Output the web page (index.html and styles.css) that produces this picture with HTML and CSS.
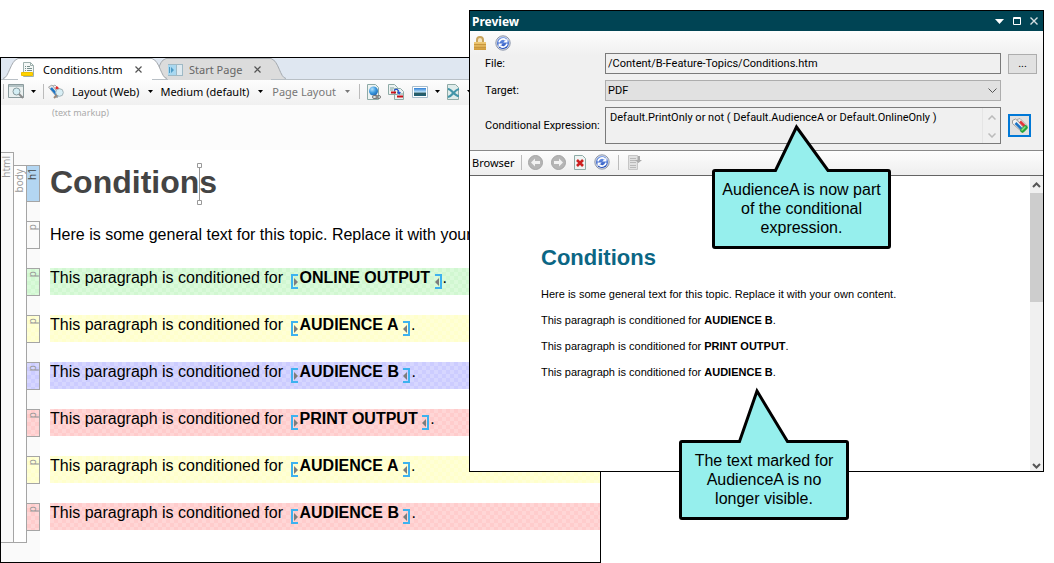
FILE: index.html
```html
<!DOCTYPE html>
<html lang="en">
<head>
<meta charset="utf-8">
<title>Conditions.htm</title>
<link rel="stylesheet" href="styles.css">
</head>
<body>
<svg class="defs" width="0" height="0" aria-hidden="true">
  <defs>
    <linearGradient id="ball" x1="0" y1="0" x2="0" y2="1"><stop offset="0" stop-color="#7fa4ee"/><stop offset="1" stop-color="#1d49b8"/></linearGradient>
    <linearGradient id="gold" x1="0" y1="0" x2="0" y2="1"><stop offset="0" stop-color="#f0cb78"/><stop offset="1" stop-color="#cf9a3a"/></linearGradient>
    <linearGradient id="photo" x1="0" y1="0" x2="0" y2="1"><stop offset="0" stop-color="#2f7fd6"/><stop offset=".5" stop-color="#b9e0f7"/><stop offset=".65" stop-color="#2d5b62"/><stop offset="1" stop-color="#1d6078"/></linearGradient>
    <radialGradient id="globe" cx=".35" cy=".3" r=".8"><stop offset="0" stop-color="#b5e2fb"/><stop offset=".5" stop-color="#3d9be0"/><stop offset="1" stop-color="#1c62ae"/></radialGradient>
    <symbol id="refresh" viewBox="0 0 16 16">
      <circle cx="8" cy="8" r="7.2" fill="#d9dde6" stroke="#8d97ab"/>
      <circle cx="8" cy="8" r="6" fill="url(#ball)"/>
      <path d="M4 7.4A4 4 0 0 1 10.6 5M12 8.6A4 4 0 0 1 5.400 11" fill="none" stroke="#fff" stroke-width="1.700"/>
      <path d="M12.500 3.200v4.300H8.300zM3.500 12.800V8.500h4.200z" fill="#fff"/>
    </symbol>
    <symbol id="mark-start" viewBox="0 0 7 15"><path d="M7 1H1v13h6" fill="none" stroke="#3db2ef" stroke-width="2"/><path d="M3 4l4 4-4 4z" fill="#7d7d7d"/></symbol>
    <symbol id="mark-end" viewBox="0 0 7 15"><path d="M0 1h6v13H0" fill="none" stroke="#3db2ef" stroke-width="2"/><path d="M4 4L0 8l4 4z" fill="#7d7d7d"/></symbol>
    <symbol id="down" viewBox="0 0 5 3"><path d="M0 0h5L2.500 3z" fill="currentColor"/></symbol>
  </defs>
</svg>

<main class="stage">
  <section class="window editor" aria-label="Editor">
    <div class="tabs">
      <div class="tab active">
        <svg class="cap" width="15" height="21" viewBox="0 0 15 21"><path d="M0 21C6 20 7 3 15 .5V21z" fill="#fff"/><path d="M0 20.500C6 20 7 3 15 .5" fill="none" stroke="#a4a9ae"/></svg>
        <div class="tab-mid">
          <svg width="14" height="16" viewBox="0 0 14 16"><path d="M2.500.5h7l3 3v11h-10z" fill="#f5f8f7" stroke="#9fb1ae"/><path d="M9.500.5v3h3" fill="none" stroke="#9fb1ae"/><path d="M4 4.500h1m1 0h3M4 6.500h1m1 0h5M4 8.500h1m1 0h5" stroke="#76908c"/><path d="M.5 10.500h11v3H.5z" fill="#ffd500" stroke="#f0c000"/></svg>
          <span>Conditions.htm</span>
          <button class="close" aria-label="Close tab"><svg width="7" height="7" viewBox="0 0 7 7"><path d="M.5.5l6 6m0-6l-6 6" stroke="#555" stroke-width="1.200"/></svg></button>
        </div>
        <svg class="cap" width="15" height="21" viewBox="0 0 15 21"><path d="M15 21C9 20 8 3 0 .5V21z" fill="#fff"/><path d="M15 20.500C9 20 8 3 0 .5" fill="none" stroke="#a4a9ae"/></svg>
      </div>
      <div class="tab idle">
        <svg class="cap" width="15" height="21" viewBox="0 0 15 21"><path d="M0 21C6 20 4 3 13 .5h2V21z" fill="#dcdcdc"/><path d="M0 20.500C6 20 4 3 13 .5h2" fill="none" stroke="#a4a9ae"/></svg>
        <div class="tab-mid">
          <svg width="15" height="12" viewBox="0 0 15 12"><path d="M0 0h15v12H0z" fill="#9fb9c5"/><path d="M0 1h8v10H0z" fill="#a9d8f0"/><path d="M9 1h5v10H9z" fill="#dfeaf0"/><path d="M3 3l3 3-3 3zM1 3h1v6H1z" fill="#4f9cc6"/></svg>
          <span>Start Page</span>
          <button class="close" aria-label="Close tab"><svg width="7" height="7" viewBox="0 0 7 7"><path d="M.5.5l6 6m0-6l-6 6" stroke="#555" stroke-width="1.200"/></svg></button>
        </div>
        <svg class="cap" width="15" height="21" viewBox="0 0 15 21"><path d="M15 21C9 20 8 3 0 .5V21z" fill="#dcdcdc"/><path d="M15 20.500C9 20 8 3 0 .5" fill="none" stroke="#a4a9ae"/></svg>
      </div>
    </div>

    <div class="toolbar">
      <i class="rule"></i>
      <button class="tool" aria-label="Preview"><svg width="16" height="15" viewBox="0 0 16 15"><path d="M.5.5h15v13H.5z" fill="#eaf0f0" stroke="#8b9b9d"/><path d="M1 1h14v2H1z" fill="#b3c2c4"/><circle cx="8.500" cy="7.500" r="3.500" fill="#d4eef4" stroke="#879b9f"/><path d="M11 10l4 4" stroke="#8b8b8b" stroke-width="2"/></svg></button>
      <svg class="drop" width="5" height="3"><use href="#down"/></svg>
      <i class="rule"></i>
      <button class="tool" aria-label="Conditions"><svg width="17" height="15" viewBox="0 0 17 15"><path d="M.5 3L4 1l8 8-3 5-2-3z" fill="#e6e6e6" stroke="#aaa"/><path d="M5 2l2-1 7 7-3 2z" fill="#f0f0f0" stroke="#aaa"/><path d="M3 4l7 8" stroke="#1a75c8" stroke-width="2.500"/><path d="M8 3l3 3" stroke="#e22929" stroke-width="2.500"/><circle cx="11.500" cy="8.500" r="3.800" fill="#d8eef5" stroke="#a4b3b8"/><path d="M9 11l-3 3" stroke="#9a8778" stroke-width="2"/></svg></button>
      <button class="menu">Layout (Web)<svg class="drop" width="5" height="3"><use href="#down"/></svg></button>
      <button class="menu">Medium (default)<svg class="drop" width="5" height="3"><use href="#down"/></svg></button>
      <button class="menu dim">Page Layout<svg class="drop" width="5" height="3"><use href="#down"/></svg></button>
      <i class="rule"></i>
      <button class="tool" aria-label="Insert hyperlink"><svg width="14" height="16" viewBox="0 0 14 16"><path d="M.5.5h8l3 3v12H.5z" fill="#edf3f2" stroke="#8eaaa6"/><circle cx="6.500" cy="7" r="4.500" fill="url(#globe)"/><rect x="5.500" y="11.500" width="5" height="3" rx="1.500" fill="#ddd" stroke="#777"/><rect x="9" y="11.500" width="4.500" height="3" rx="1.500" fill="none" stroke="#777"/></svg></button>
      <button class="tool" aria-label="Insert cross-reference"><svg width="17" height="16" viewBox="0 0 17 16"><path d="M.5.5h6l3 3v7h-9zM6.500 4.500h6l3 3v8h-9z" fill="#edf3f2" stroke="#8eaaa6"/><path d="M2 4h4M2 6h3M11 10h4" stroke="#82a39f"/><path d="M3 8.500h5M9 12.500h6" stroke="#c80f16" stroke-width="2.200"/><path d="M6 6.500C8 4.500 11 5 11 9" fill="none" stroke="#2653cf" stroke-width="1.300"/><path d="M9 8h4l-2 3z" fill="#2653cf"/></svg></button>
      <button class="tool" aria-label="Insert image"><svg width="16" height="12" viewBox="0 0 16 12"><path d="M.5.5h15v11H.5z" fill="#fff" stroke="#a7bccb"/><path d="M2 2h12v8H2z" fill="url(#photo)"/></svg></button>
      <svg class="drop" width="5" height="3"><use href="#down"/></svg>
      <button class="tool" aria-label="Insert variable"><svg width="13" height="16" viewBox="0 0 13 16"><path d="M.5.5h8l3 3v12H.5z" fill="#dfeceb" stroke="#8eaaa6"/><path d="M1 5c4 0 6 7 11 7M1 13c5-1 6-7 11-8" stroke="#4295a8" stroke-width="2.200" fill="none"/></svg></button>
      <svg class="drop" width="5" height="3"><use href="#down"/></svg>
    </div>

    <div class="markup">(text markup)</div>

    <div class="document">
      <div class="span-html"><span class="tag-text">html</span></div>
      <div class="span-body"><span class="tag-text">body</span></div>
      <div class="rows">
        <div class="row head"><span class="tag current"><span class="tag-text">h1</span></span><h1>Condition<span class="caret"><svg width="5" height="42" viewBox="0 0 5 42"><path d="M2.500 5v32M.5.5h4v4h-4zM.5 37.500h4v4h-4z" fill="#fff" stroke="#999"/></svg></span>s</h1></div>
        <div class="row intro"><span class="tag"><span class="tag-text">p</span></span><p>Here is some general text for this topic. Replace it with your own content.</p></div>
        <div class="row green"><span class="tag"><span class="tag-text">p</span></span><p>This paragraph is conditioned for <svg class="mark start" width="7" height="15"><use href="#mark-start"/></svg><b>ONLINE OUTPUT</b> <svg class="mark" width="7" height="15"><use href="#mark-end"/></svg>.</p></div>
        <div class="row yellow"><span class="tag"><span class="tag-text">p</span></span><p>This paragraph is conditioned for <svg class="mark start" width="7" height="15"><use href="#mark-start"/></svg><b>AUDIENCE A</b> <svg class="mark" width="7" height="15"><use href="#mark-end"/></svg>.</p></div>
        <div class="row blue"><span class="tag"><span class="tag-text">p</span></span><p>This paragraph is conditioned for <svg class="mark start" width="7" height="15"><use href="#mark-start"/></svg><b>AUDIENCE B</b> <svg class="mark" width="7" height="15"><use href="#mark-end"/></svg>.</p></div>
        <div class="row red"><span class="tag"><span class="tag-text">p</span></span><p>This paragraph is conditioned for <svg class="mark start" width="7" height="15"><use href="#mark-start"/></svg><b>PRINT OUTPUT</b> <svg class="mark" width="7" height="15"><use href="#mark-end"/></svg>.</p></div>
        <div class="row yellow"><span class="tag"><span class="tag-text">p</span></span><p>This paragraph is conditioned for <svg class="mark start" width="7" height="15"><use href="#mark-start"/></svg><b>AUDIENCE A</b> <svg class="mark" width="7" height="15"><use href="#mark-end"/></svg>.</p></div>
        <div class="row red"><span class="tag"><span class="tag-text">p</span></span><p>This paragraph is conditioned for <svg class="mark start" width="7" height="15"><use href="#mark-start"/></svg><b>AUDIENCE B</b> <svg class="mark" width="7" height="15"><use href="#mark-end"/></svg>.</p></div>
      </div>
    </div>
  </section>

  <section class="window preview" aria-label="Preview">
    <header class="title">
      <span class="title-text">Preview</span>
      <button class="sys" aria-label="Window menu"><svg width="9" height="5" viewBox="0 0 9 5"><path d="M0 0h9L4.500 5z" fill="#fff"/></svg></button>
      <button class="sys" aria-label="Maximize"><svg width="8" height="8" viewBox="0 0 8 8"><path d="M.5.5h7v7h-7zM0 1.500h8" fill="none" stroke="#fff"/></svg></button>
      <button class="sys" aria-label="Close"><svg width="8" height="8" viewBox="0 0 8 8"><path d="M.5.5l7 7m0-7l-7 7" stroke="#d5dfe2" stroke-width="1.400"/></svg></button>
    </header>
    <div class="options">
      <div class="option-tools">
        <button class="tool" aria-label="Lock"><svg width="12" height="14" viewBox="0 0 12 14"><path d="M3 7V4a3 3 0 0 1 6 0v3" fill="#f3e3bd" stroke="#c9a45c" stroke-width="2"/><path d="M0 6h12v8H0z" fill="url(#gold)"/><path d="M0 8.500h12M0 11.500h12" stroke="#c8973f"/></svg></button>
        <button class="tool" aria-label="Refresh"><svg width="16" height="16"><use href="#refresh"/></svg></button>
      </div>
      <div class="form">
        <label for="file">File:</label>
        <input class="field" id="file" type="text" value="/Content/B-Feature-Topics/Conditions.htm">
        <button class="browse" aria-label="Browse for file">...</button>
        <label for="target">Target:</label>
        <div class="combo">
          <select id="target"><option>PDF</option></select>
          <svg class="chevron" width="9" height="5" viewBox="0 0 9 5"><path d="M.5.5l4 4 4-4" fill="none" stroke="#555"/></svg>
        </div>
        <span></span>
        <label for="expr">Conditional Expression:</label>
        <div class="expression">
          <textarea id="expr" rows="2">Default.PrintOnly or not ( Default.AudienceA or Default.OnlineOnly )</textarea>
          <span class="spin"><svg width="8" height="5" viewBox="0 0 8 5"><path d="M.5 4.500L4 1l3.500 3.500" fill="none" stroke="#bbb" stroke-width="1.500"/></svg><svg width="8" height="5" viewBox="0 0 8 5"><path d="M.5.5L4 4 7.500.5" fill="none" stroke="#bbb" stroke-width="1.500"/></svg></span>
        </div>
        <button class="cond" aria-label="Edit conditions"><svg width="16" height="15" viewBox="0 0 16 15"><path d="M.5 2.500l3-1.500 9 8-3 4.500-9-8z" fill="#f4f4f4" stroke="#9a9a9a"/><path d="M5 1.500l3-1 7 7-3 3z" fill="#eee" stroke="#aaa"/><path d="M3.500 5l6 6" stroke="#1b73c4" stroke-width="2.500"/><path d="M8 3.500l5 5" stroke="#e3343a" stroke-width="2.500"/><path d="M10.500 12.500l3-3" stroke="#26a43c" stroke-width="4.500" stroke-linecap="round"/><path d="M10 12l3-3" stroke="#8ae089" stroke-width="1.500" stroke-linecap="round"/></svg></button>
      </div>
    </div>
    <div class="browserbar">
      <span class="browser-name">Browser</span>
      <i class="rule"></i>
      <button class="tool" aria-label="Back"><svg width="15" height="15" viewBox="0 0 15 15"><circle cx="7.500" cy="7.500" r="7" fill="#b5b5b5" stroke="#a5a5a5"/><path d="M3 7.500l4-4V6h5v3H7v2.500z" fill="#f2f2f2"/></svg></button>
      <button class="tool" aria-label="Forward"><svg width="15" height="15" viewBox="0 0 15 15"><circle cx="7.500" cy="7.500" r="7" fill="#b5b5b5" stroke="#a5a5a5"/><path d="M12 7.500l-4-4V6H3v3h5v2.500z" fill="#f2f2f2"/></svg></button>
      <button class="tool" aria-label="Stop"><svg width="12" height="15" viewBox="0 0 12 15"><path d="M.5.5h8l3 3v11H.5z" fill="#eff4f3" stroke="#8eaaa6"/><path d="M3 5l6 6m0-6l-6 6" stroke="#cc2020" stroke-width="2.600"/></svg></button>
      <button class="tool" aria-label="Refresh page"><svg width="16" height="16"><use href="#refresh"/></svg></button>
      <i class="rule"></i>
      <button class="tool" aria-label="Send to" disabled><svg width="15" height="15" viewBox="0 0 15 15"><path d="M1.500.5h9v14h-9z" fill="#e1e1e1" stroke="#c6c6c6"/><path d="M3 3.500h6M3 5.500h6M3 7.500h6M3 10.500h6M3 12.500h6" stroke="#b9b9b9"/><path d="M8 5h3V1h2v4h2l-3.500 3z" fill="#aaa"/></svg></button>
    </div>
    <div class="viewport">
      <article class="page">
        <h2>Conditions</h2>
        <p>Here is some general text for this topic. Replace it with your own content.</p>
        <p>This paragraph is conditioned for <b>AUDIENCE B</b>.</p>
        <p>This paragraph is conditioned for <b>PRINT OUTPUT</b>.</p>
        <p>This paragraph is conditioned for <b>AUDIENCE B</b>.</p>
      </article>
      <div class="scrollbar">
        <svg width="9" height="6" viewBox="0 0 9 6"><path d="M1 5l3.500-3.500L8 5" fill="none" stroke="#555" stroke-width="2"/></svg>
        <span class="thumb"></span>
        <svg width="9" height="6" viewBox="0 0 9 6"><path d="M1 1l3.500 3.500L8 1" fill="none" stroke="#555" stroke-width="2"/></svg>
      </div>
    </div>

    <aside class="callout first">
      <svg class="tail" width="60" height="48" viewBox="0 0 60 48"><path d="M4 46L25.500 1 57 46z" fill="#96efed"/><path d="M0 44.500h4.500L25.500 1 57 44.500h3" fill="none" stroke="#000" stroke-width="3"/></svg>
      AudienceA is now part<br>of the conditional<br>expression.
    </aside>
    <aside class="callout second">
      <svg class="tail" width="60" height="55" viewBox="0 0 60 55"><path d="M5 54L23 1l31 53z" fill="#96efed"/><path d="M0 51.500h5.500L23 1l30.500 50.500H60" fill="none" stroke="#000" stroke-width="3"/></svg>
      The text marked for<br>AudienceA is no<br>longer visible.
    </aside>
  </section>
</main>
</body>
</html>
```

FILE: styles.css
```css
* { box-sizing: border-box; }
body {
  margin: 0;
  background: #fff;
  color: #000;
  font-family: "Noto Sans", "Open Sans", sans-serif;
  font-size: 11px;
}
svg { display: block; flex: none; }
.defs { position: absolute; }
button {
  font: inherit;
  color: inherit;
  background: none;
  border: 0;
  padding: 0;
}
h1, h2, p { margin: 0; }

/* Two overlapping windows share the middle column */
.stage {
  display: grid;
  grid-template-columns: 469px 132px minmax(0, 1fr);
  align-items: start;
}
.window {
  grid-row: 1;
  border: 1px solid #000;
  min-width: 0;
}
.editor {
  grid-column: 1 / 3;
  margin-top: 57px;
  background: #fcfcfc;
  overflow: hidden;
}
.preview {
  grid-column: 2 / 4;
  margin: 10px 10px 0 0;
  background: #f0f0f0;
  position: relative;
}

/* Tabs */
.tabs {
  display: flex;
  height: 22px;
  padding-left: 2px;
  background: #dfe7f1;
  border-bottom: 1px solid #b9c0c6;
}
.tab { display: flex; height: 22px; }
.tab-mid {
  display: flex;
  align-items: center;
  height: 22px;
  border-top: 1px solid #a4a9ae;
}
.tab-mid span { flex: 1; white-space: nowrap; }
.active { z-index: 1; }
.active .tab-mid { background: #fff; width: 134px; gap: 8px; padding: 0 10px 0 3px; }
.idle { margin-left: -14px; color: #666; }
.idle .tab-mid { background: #dcdcdc; width: 103px; gap: 6px; padding-right: 10px; }

/* Editor toolbar */
.toolbar {
  display: flex;
  align-items: center;
  gap: 7px;
  height: 25px;
  padding: 0 0 2px 2px;
  background: linear-gradient(#fdfdfd, #f0f0f0);
}
.rule { width: 1px; height: 15px; background: #bbb; flex: none; }
.menu { display: flex; align-items: center; gap: 9px; white-space: nowrap; }
.toolbar .rule + .tool { margin-left: -3px; }
.toolbar .dim + .rule + .tool { margin-left: 0; }
.dim { color: #777; }
.toolbar .dim { margin: 0 2px; }
.markup {
  height: 45px;
  padding-left: 51px;
  line-height: 15px;
  font-size: 9px;
  color: #aaa;
}

/* Document structure bars and rows */
.document {
  display: flex;
  background: linear-gradient(90deg, #fafafa 39px, #fff 39px);
  padding: 2px 0 19px;
}
.span-html, .span-body {
  width: 13px;
  border: solid #a5a5a5;
  border-width: 1px 1px 1px 0;
  padding-top: 3px;
}
.span-body { margin-top: 13px; background: #fff; }
.tag-text {
  display: block;
  writing-mode: vertical-rl;
  transform: rotate(180deg);
  font-size: 10px;
  line-height: 11px;
  color: #999;
}
.rows {
  flex: 1;
  display: grid;
  gap: 19px;
  padding: 13px 0 12px;
  min-width: 0;
}
.row {
  display: grid;
  grid-template-columns: 13px minmax(0, 1fr);
  gap: 10px;
  height: 28px;
}
.row.head { height: 37px; }
.tag { border: 1px solid #a5a5a5; border-left: 0; padding-top: 2px; }
.tag.current { background: #b3d6f2; }
.current .tag-text { color: #444; }
.row h1, .row p { font-family: "Liberation Sans", Arial, sans-serif; white-space: nowrap; }
.row h1 { font-size: 32px; line-height: 35px; color: #444; }
.row p { font-size: 16px; line-height: 19px; height: 27px; overflow: hidden; }
.row.intro p { line-height: 27px; }
.caret { display: inline-block; position: relative; }
.caret svg { position: absolute; left: -2px; bottom: -12px; }
.mark { display: inline-block; vertical-align: -6px; margin-right: 1px; }
.mark.start { margin-left: 4px; }
.green { --a: #d1f7d1; --b: #dafada; }
.yellow { --a: #ffffcc; --b: #ffffd6; }
.blue { --a: #ccccff; --b: #d6d6ff; }
.red { --a: #ffcccc; --b: #ffd6d6; }
.green > *, .yellow > *, .blue > *, .red > * {
  background: repeating-conic-gradient(var(--a) 0 25%, var(--b) 0 50%) 0 0 / 8px 8px;
}

/* Preview window */
.title {
  display: flex;
  align-items: center;
  gap: 9px;
  height: 20px;
  padding: 0 5px 0 2px;
  background: #004454;
  color: #fff;
  font-size: 12px;
  font-weight: bold;
}
.title-text { flex: 1; }
.options { border-bottom: 1px solid #888; background: linear-gradient(#fdfdfd, #f0f0f0 24px); }
.option-tools { display: flex; align-items: center; gap: 9px; height: 22px; padding: 2px 0 0 4px; }
.form {
  display: grid;
  grid-template-columns: 113px minmax(0, 1fr) 29px;
  gap: 6px 7px;
  align-items: center;
  padding: 0 6px 6px 15px;
  font-family: Roboto, "Noto Sans", sans-serif;
}
.form label { white-space: nowrap; }
.field, .combo select, .expression { width: 100%; border: 1px solid #7a7a7a; background: #f0f0f0; }
.field, .combo select, .expression textarea { font: inherit; color: inherit; border-radius: 0; margin: 0; }
.field { height: 21px; padding: 0 2px; }
.browse { height: 20px; background: #e1e1e1; border: 1px solid #adadad; }
.combo { position: relative; }
.combo select {
  display: block;
  appearance: none;
  height: 21px;
  padding: 0 2px;
  border-color: #adadad;
  background: #e1e1e1;
}
.chevron { position: absolute; right: 4px; top: 8px; pointer-events: none; }
.expression { display: flex; height: 37px; }
.expression textarea {
  flex: 1;
  min-width: 0;
  border: 0;
  background: none;
  padding: 2px 4px;
  line-height: 15px;
  resize: none;
  overflow: hidden;
}
.spin {
  display: flex;
  flex-direction: column;
  align-items: center;
  justify-content: space-between;
  width: 18px;
  padding: 7px 0 5px;
  border-left: 1px solid #e5e5e5;
}
.cond {
  width: 23px;
  height: 23px;
  border: 2px solid #0078d7;
  background: #e1e1e1;
  display: grid;
  place-items: center;
}
.browserbar {
  display: flex;
  align-items: center;
  gap: 8px;
  height: 25px;
  padding: 0 0 2px 2px;
  border-bottom: 1px solid #646464;
  background: linear-gradient(#fdfdfd, #eee);
}
.browserbar .rule { margin: 0 -2px; }
.browserbar .tool + .rule { margin: 0; }
.viewport { display: flex; background: #fff; }
.page {
  flex: 1;
  min-width: 0;
  padding: 67px 0 92px 71px;
  font-family: "Liberation Sans", Arial, sans-serif;
  font-size: 11px;
  line-height: 13px;
}
.page h2 { font-size: 22px; line-height: 30px; color: #0b6684; }
.page p { margin-top: 13px; }
.page h2 + p { margin-top: 15px; }
.scrollbar {
  display: flex;
  flex-direction: column;
  align-items: center;
  width: 13px;
  padding: 6px 0 2px;
  background: #f0f0f0;
}
.thumb { width: 13px; height: 109px; margin: 5px 0 auto; background: #cdcdcd; }

/* Callouts */
.callout {
  position: absolute;
  border: 3px solid #000;
  border-radius: 3px;
  background: #96efed;
  padding: 8px 0 9px;
  font: 16px/19px "Liberation Sans", Arial, sans-serif;
  text-align: center;
  white-space: nowrap;
}
.first { left: 242px; top: 158px; width: 179px; }
.second { left: 209px; top: 429px; width: 170px; }
.tail { position: absolute; overflow: visible; }
.first .tail { left: 56px; bottom: calc(100% - 2px); }
.second .tail { left: 52px; bottom: calc(100% - 2px); }
```
